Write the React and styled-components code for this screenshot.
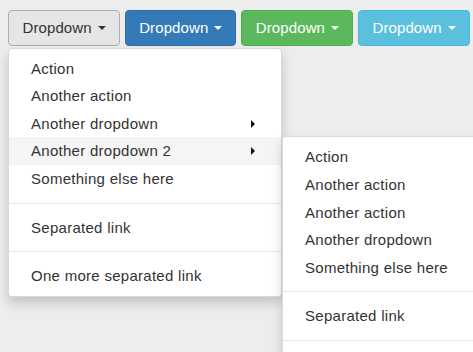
import React from 'react';
import styled, { createGlobalStyle } from 'styled-components';

const GlobalStyle = createGlobalStyle`
  html {
    overflow: hidden;
    background: #ededed;
  }
  body {
    margin: 0;
    min-height: 100vh;
    font-family: "Liberation Sans", Arial, sans-serif;
    font-size: 15px;
    line-height: 1.44;
    color: #333;
  }
`;

const variants = {
  default: { bg: '#e6e6e6', border: '#adadad', color: '#333' },
  primary: { bg: '#337ab7', border: '#2e6da4', color: '#fff' },
  success: { bg: '#5cb85c', border: '#4cae4c', color: '#fff' },
  info: { bg: '#5bc0de', border: '#46b8da', color: '#fff' },
};

const Page = styled.div`
  padding: 10px 8px;
`;

const Toolbar = styled.div`
  display: flex;
  gap: 5px;
`;

const Group = styled.div`
  position: relative;
`;

const Button = styled.button`
  display: flex;
  align-items: center;
  padding: 6px 13px 6px 13.5px;
  font: inherit;
  line-height: 1.44;
  letter-spacing: 0.1px;
  color: ${(p) => variants[p.$variant].color};
  background: ${(p) => variants[p.$variant].bg};
  border: 1px solid ${(p) => variants[p.$variant].border};
  border-radius: 4px;
  cursor: pointer;
`;

const Caret = styled.span`
  display: inline-block;
  width: 0;
  height: 0;
  margin-left: 6px;
  border-top: 4px solid currentColor;
  border-left: 4px solid transparent;
  border-right: 4px solid transparent;
`;

const Menu = styled.ul`
  position: absolute;
  top: ${(p) => (p.$sub ? '-1px' : 'calc(100% + 2px)')};
  left: ${(p) => (p.$sub ? 'calc(100% + 1px)' : '0')};
  width: ${(p) => (p.$sub ? '200px' : '272px')};
  margin: 0;
  padding: 6px 0;
  list-style: none;
  background: #fff;
  border: 1px solid rgba(0, 0, 0, 0.15);
  border-radius: 4px;
  box-shadow: 0 6px 12px rgba(0, 0, 0, 0.175);
  z-index: ${(p) => (p.$sub ? 3 : 2)};
`;

const Item = styled.li`
  position: relative;
`;

const ItemLink = styled.a`
  display: flex;
  align-items: center;
  justify-content: space-between;
  padding: 3px 21px 3px 22px;
  color: #333;
  letter-spacing: 0.28px;
  white-space: nowrap;
  text-decoration: none;
  background: ${(p) => (p.$active ? '#f5f5f5' : 'transparent')};
`;

const SubCaret = styled.span`
  width: 0;
  height: 0;
  margin-right: 5px;
  border-left: 4px solid #111;
  border-top: 4px solid transparent;
  border-bottom: 4px solid transparent;
`;

const Divider = styled.li`
  height: 1px;
  margin: 10px 0;
  background: #e5e5e5;
`;

const subItems = [
  'Action',
  'Another action',
  'Another action',
  'Another dropdown',
  'Something else here',
  '-',
  'Separated link',
  '-',
];

const SubMenu = () => (
  <Menu $sub>
    {subItems.map((label, i) =>
      label === '-' ? (
        <Divider key={i} />
      ) : (
        <Item key={i}>
          <ItemLink>{label}</ItemLink>
        </Item>
      )
    )}
  </Menu>
);

const MainMenu = () => (
  <Menu>
    <Item><ItemLink>Action</ItemLink></Item>
    <Item><ItemLink>Another action</ItemLink></Item>
    <Item>
      <ItemLink>Another dropdown<SubCaret /></ItemLink>
    </Item>
    <Item>
      <ItemLink $active>Another dropdown 2<SubCaret /></ItemLink>
      <SubMenu />
    </Item>
    <Item><ItemLink>Something else here</ItemLink></Item>
    <Divider />
    <Item><ItemLink>Separated link</ItemLink></Item>
    <Divider />
    <Item><ItemLink>One more separated link</ItemLink></Item>
  </Menu>
);

export default function App() {
  return (
    <Page>
      <GlobalStyle />
      <Toolbar>
        {['default', 'primary', 'success', 'info'].map((v) => (
          <Group key={v}>
            <Button $variant={v}>
              Dropdown<Caret />
            </Button>
            {v === 'default' && <MainMenu />}
          </Group>
        ))}
      </Toolbar>
    </Page>
  );
}
